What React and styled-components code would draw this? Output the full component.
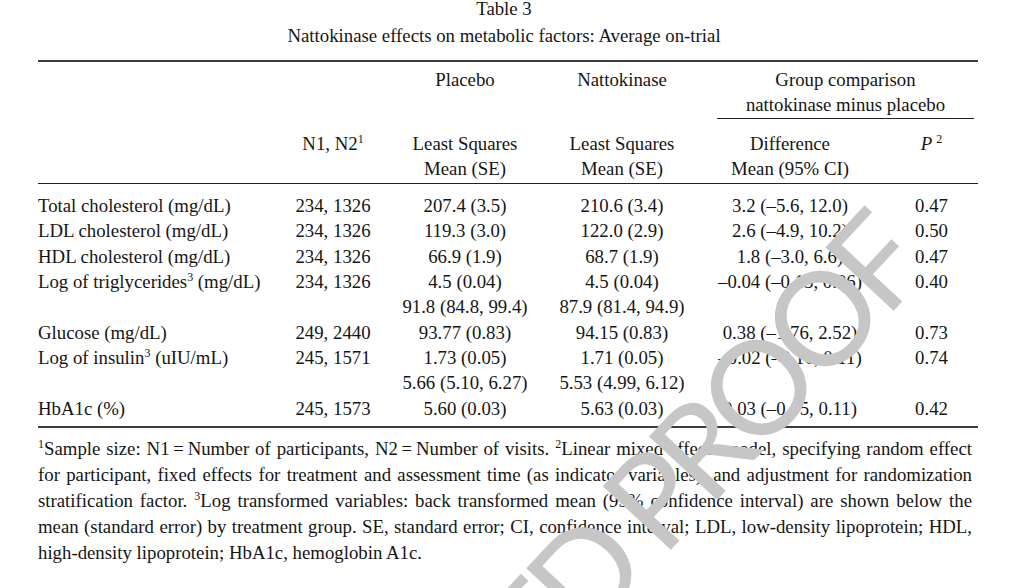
import React from 'react'
import styled, { createGlobalStyle } from 'styled-components'

const GlobalStyle = createGlobalStyle`
  html, body {
    margin: 0;
    padding: 0;
    background: #fff;
  }
  body {
    font-family: "Liberation Serif", "Times New Roman", serif;
    color: #151515;
  }
`

const Page = styled.div`
  position: relative;
  width: 1014px;
  height: 588px;
  overflow: hidden;
  box-sizing: border-box;
  padding: 0 36px 0 38px;
  font-size: 18.8px;
`

const Title = styled.div`
  padding-right: 8px;
  text-align: center;
`

const TitleLine = styled.div`
  line-height: ${(p) => p.$lh}px;
  margin-top: ${(p) => p.$gap || 0}px;
`

const Table = styled.table`
  width: 940px;
  margin-top: 11px;
  border-collapse: collapse;
  border-spacing: 0;
  table-layout: fixed;
  border-top: 2px solid #3c3c3c;
  border-bottom: 2px solid #3c3c3c;
  line-height: 25.3px;
`

const HeadRow = styled.tr`
  vertical-align: top;

  > th {
    padding-top: ${(p) => p.$top}px;
    padding-bottom: ${(p) => p.$bottom}px;
    border-bottom: ${(p) => (p.$rule ? '1px solid #222' : 'none')};
  }
`

const Th = styled.th`
  font-weight: normal;
  padding-left: 0;
  padding-right: 0;
  text-align: center;
`

const GroupHead = styled.div`
  margin: 0 4px 0 22px;
  border-bottom: 1px solid #222;
`

const Row = styled.tr`
  > td {
    padding-top: ${(p) => (p.$first ? 9 : 0)}px;
    padding-bottom: ${(p) => (p.$last ? 5 : 0)}px;
  }
`

const Td = styled.td`
  padding-left: 0;
  padding-right: 0;
  white-space: nowrap;
  text-align: ${(p) => (p.$left ? 'left' : 'center')};
`

const Sup = styled.sup`
  font-size: 12px;
  line-height: 0;
  vertical-align: 7px;
  margin-left: ${(p) => p.$space || 0}px;
`

const Notes = styled.div`
  margin: 8px 6px 0 0;
  line-height: 26px;
`

const NoteLine = styled.div`
  text-align: justify;
  text-align-last: ${(p) => (p.$last ? 'left' : 'justify')};
`

/* proof stamp lying over the table */
const Watermark = styled.div`
  position: absolute;
  left: 104px;
  top: 989px;
  transform-origin: 0 0;
  transform: rotate(-47deg);
  font-family: Lato, "DejaVu Sans", sans-serif;
  font-weight: 400;
  font-size: 130px;
  letter-spacing: -10px;
  line-height: 1;
  white-space: nowrap;
  color: #c6c6c6;
  pointer-events: none;
`

const rows = [
  ['Total cholesterol (mg/dL)', '234, 1326', '207.4 (3.5)', '210.6 (3.4)', '3.2 (–5.6, 12.0)', '0.47'],
  ['LDL cholesterol (mg/dL)', '234, 1326', '119.3 (3.0)', '122.0 (2.9)', '2.6 (–4.9, 10.2)', '0.50'],
  ['HDL cholesterol (mg/dL)', '234, 1326', '66.9 (1.9)', '68.7 (1.9)', '1.8 (–3.0, 6.6)', '0.47'],
  [<>Log of triglycerides<Sup>3</Sup> (mg/dL)</>, '234, 1326', '4.5 (0.04)', '4.5 (0.04)', '–0.04 (–0.15, 0.06)', '0.40'],
  ['', '', '91.8 (84.8, 99.4)', '87.9 (81.4, 94.9)', '', ''],
  ['Glucose (mg/dL)', '249, 2440', '93.77 (0.83)', '94.15 (0.83)', '0.38 (–1.76, 2.52)', '0.73'],
  [<>Log of insulin<Sup>3</Sup> (uIU/mL)</>, '245, 1571', '1.73 (0.05)', '1.71 (0.05)', '–0.02 (–0.16, 0.11)', '0.74'],
  ['', '', '5.66 (5.10, 6.27)', '5.53 (4.99, 6.12)', '', ''],
  ['HbA1c (%)', '245, 1573', '5.60 (0.03)', '5.63 (0.03)', '0.03 (–0.05, 0.11)', '0.42'],
]

const App = () => {
  return (
    <Page>
      <GlobalStyle />
      <Title>
        <TitleLine $lh={17}>Table 3</TitleLine>
        <TitleLine $lh={27} $gap={5}>
          Nattokinase effects on metabolic factors: Average on-trial
        </TitleLine>
      </Title>

      <Table>
        <colgroup>
          <col style={{ width: 247 }} />
          <col style={{ width: 96 }} />
          <col style={{ width: 168 }} />
          <col style={{ width: 146 }} />
          <col style={{ width: 190 }} />
          <col style={{ width: 93 }} />
        </colgroup>
        <thead>
          <HeadRow $top={5} $bottom={0}>
            <Th />
            <Th />
            <Th>Placebo</Th>
            <Th>Nattokinase</Th>
            <Th colSpan={2}>
              <GroupHead>
                Group comparison
                <br />
                nattokinase minus placebo
              </GroupHead>
            </Th>
          </HeadRow>
          <HeadRow $top={12} $bottom={2} $rule>
            <Th />
            <Th>
              N1, N2<Sup>1</Sup>
            </Th>
            <Th>
              Least Squares
              <br />
              Mean (SE)
            </Th>
            <Th>
              Least Squares
              <br />
              Mean (SE)
            </Th>
            <Th>
              Difference
              <br />
              Mean (95% CI)
            </Th>
            <Th>
              <i>P</i>
              <Sup $space={4}>2</Sup>
            </Th>
          </HeadRow>
        </thead>
        <tbody>
          {rows.map((r, i) => (
            <Row key={i} $first={i === 0} $last={i === rows.length - 1}>
              {r.map((c, j) => (
                <Td key={j} $left={j === 0}>
                  {c}
                </Td>
              ))}
            </Row>
          ))}
        </tbody>
      </Table>

      <Notes>
        <NoteLine>
          <Sup>1</Sup>Sample size: N1&thinsp;=&thinsp;Number of participants, N2&thinsp;=&thinsp;Number of visits. <Sup>2</Sup>Linear mixed effects model, specifying random effect
        </NoteLine>
        <NoteLine>
          for participant, fixed effects for treatment and assessment time (as indicator variables), and adjustment for randomization
        </NoteLine>
        <NoteLine>
          stratification factor. <Sup>3</Sup>Log transformed variables: back transformed mean (95% confidence interval) are shown below the
        </NoteLine>
        <NoteLine>
          mean (standard error) by treatment group. SE, standard error; CI, confidence interval; LDL, low-density lipoprotein; HDL,
        </NoteLine>
        <NoteLine $last>high-density lipoprotein; HbA1c, hemoglobin A1c.</NoteLine>
      </Notes>

      <Watermark>CORRECTED PROOF</Watermark>
    </Page>
  )
}

export default App
